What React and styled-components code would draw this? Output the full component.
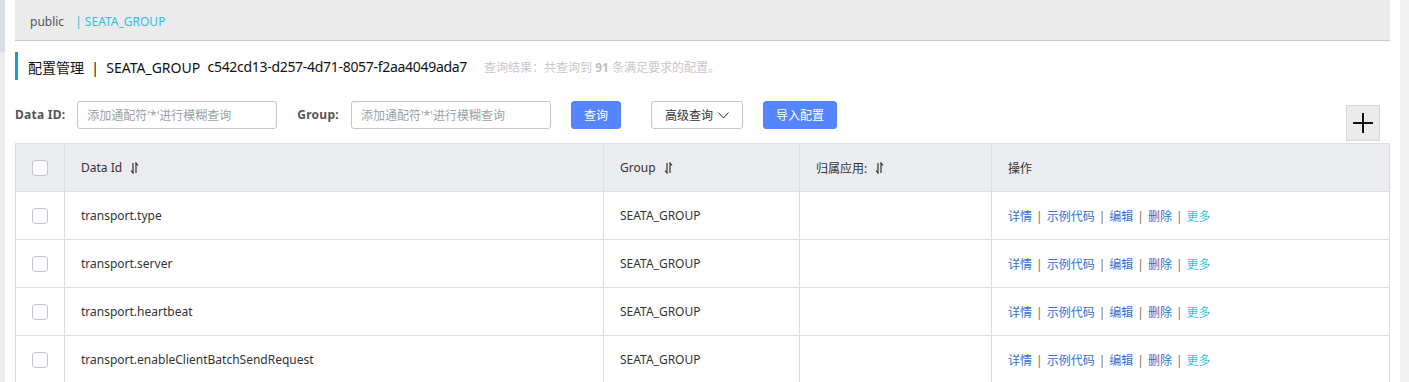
import React from "react";
import styled, { createGlobalStyle } from "styled-components";

const Global = createGlobalStyle`
  html, body { margin: 0; padding: 0; background: #fff; }
  body {
    font-family: "Noto Sans", "Noto Sans CJK SC", sans-serif;
    color: #333;
    overflow: hidden;
  }
  * { box-sizing: border-box; }
`;

const Page = styled.div`
  display: flex;
  width: 1409px;
  height: 382px;
  overflow: hidden;
`;

const Rail = styled.div`
  width: 5px;
  flex: none;
  background: linear-gradient(#dadee5 0, #dadee5 52px, #eaecf0 52px);
`;

const Scrollbar = styled.div`
  width: 9px;
  flex: none;
  background: #f1f1f1;
`;

const Main = styled.div`
  flex: 1;
  min-width: 0;
  padding: 0 10px;
  display: flex;
  flex-direction: column;
`;

const NsBar = styled.div`
  flex: none;
  height: 41px;
  background: #ebebeb;
  border-bottom: 1px solid #c9c9c9;
  display: flex;
  align-items: center;
  padding: 3px 0 0 15px;
  font-size: 12px;
`;

const NsItem = styled.span`
  color: ${(p) => (p.$active ? "#2fc0dc" : "#555")};
  margin-right: ${(p) => (p.$active ? "0" : "11px")};
`;

const TitleRow = styled.div`
  flex: none;
  margin-top: 11px;
  height: 28px;
  border-left: 3px solid #1a9bd1;
  padding: 1px 0 0 10px;
  display: flex;
  align-items: center;
  font-size: 14px;
  color: #111;
  white-space: pre;
`;

const Uuid = styled.span`
  letter-spacing: -0.3px;
`;

const Hint = styled.span`
  margin-left: 17px;
  font-size: 12px;
  color: #c8c8c8;
  & b { font-weight: bold; color: #bdbdbd; }
`;

const SearchRow = styled.div`
  flex: none;
  margin-top: 21px;
  height: 40px;
  display: flex;
  align-items: flex-start;
`;

const Label = styled.label`
  height: 28px;
  line-height: 28px;
  font-size: 12px;
  font-weight: bold;
  letter-spacing: 0.25px;
  color: #555;
  margin-right: 12px;
  margin-left: ${(p) => p.$ml || 0}px;
`;

const Input = styled.input`
  width: 200px;
  height: 28px;
  border: 1px solid #c4c6cf;
  border-radius: 3px;
  padding: 0 9px;
  font-size: 12px;
  font-family: inherit;
  outline: none;
  &::placeholder { color: #a0a0a0; }
`;

const Btn = styled.button`
  height: 28px;
  margin-left: ${(p) => p.$ml}px;
  padding: 0 ${(p) => p.$px || 12}px;
  border-radius: 3px;
  font-size: 12px;
  font-family: inherit;
  display: inline-flex;
  align-items: center;
  gap: 5px;
  cursor: pointer;
  border: 1px solid ${(p) => (p.$primary ? "#5584ff" : "#c4c6cf")};
  background: ${(p) => (p.$primary ? "#5584ff" : "#fff")};
  color: ${(p) => (p.$primary ? "#fff" : "#333")};
`;

const PlusBtn = styled.button`
  margin-left: auto;
  margin-right: 10px;
  margin-top: 4px;
  width: 34px;
  height: 36px;
  background: #ebebeb;
  border: 1px solid #d8d8d8;
  padding: 0;
  display: flex;
  align-items: center;
  justify-content: center;
`;

const Table = styled.div`
  flex: none;
  margin-top: 2px;
  border: 1px solid #dcdee3;
  border-bottom: none;
`;

const Row = styled.div`
  display: grid;
  grid-template-columns: 49px 539px 196px 192px 1fr;
  height: 48px;
  border-bottom: 1px solid #dcdee3;
  background: ${(p) => (p.$head ? "#ebecf0" : "#fff")};
`;

const Cell = styled.div`
  display: flex;
  align-items: center;
  padding-left: 16px;
  font-size: 12px;
  color: #333;
  border-right: ${(p) => (p.$last ? "none" : "1px solid #dcdee3")};
  white-space: nowrap;
  gap: 8px;
`;

const Check = styled.span`
  width: 16px;
  height: 16px;
  border: 1px solid #c4c6cf;
  border-radius: 3px;
  background: #fff;
  display: inline-block;
`;

const Link = styled.a`
  color: ${(p) => (p.$more ? "#37c5df" : "#2f6fd6")};
  text-decoration: none;
`;

const Sep = styled.span`
  color: #8a6a50;
  margin: 0 4px;
`;

const SortIcon = () => (
  <svg width="9" height="12" viewBox="0 0 9 12" fill="none" stroke="#333" strokeWidth="1.2">
    <path d="M3 1 V11 L1 8.5" />
    <path d="M6 11 V1 L8 3.5" />
  </svg>
);

const Chevron = () => (
  <svg width="11" height="7" viewBox="0 0 11 7" fill="none" stroke="#333" strokeWidth="1">
    <path d="M0.5 0.5 L5.5 6 L10.5 0.5" />
  </svg>
);

const Plus = () => (
  <svg width="22" height="22" viewBox="0 0 22 22" stroke="#111" strokeWidth="2">
    <path d="M1 11 H21" />
    <path d="M11 1 V21" />
  </svg>
);

const rows = [
  "transport.type",
  "transport.server",
  "transport.heartbeat",
  "transport.enableClientBatchSendRequest",
];

export default function App() {
  return (
    <>
      <Global />
      <Page>
        <Rail />
        <Main>
          <NsBar>
            <NsItem>public</NsItem>
            <NsItem $active>| SEATA_GROUP</NsItem>
          </NsBar>
          <TitleRow>
            <span>{"配置管理  |  SEATA_GROUP  "}</span>
            <Uuid>c542cd13-d257-4d71-8057-f2aa4049ada7</Uuid>
            <Hint>
              查询结果：共查询到 <b>91</b> 条满足要求的配置。
            </Hint>
          </TitleRow>
          <SearchRow>
            <Label>Data ID:</Label>
            <Input placeholder="添加通配符'*'进行模糊查询" />
            <Label $ml={20}>Group:</Label>
            <Input placeholder="添加通配符'*'进行模糊查询" />
            <Btn $primary $ml={20}>查询</Btn>
            <Btn $ml={30} $px={13}>
              高级查询 <Chevron />
            </Btn>
            <Btn $primary $ml={20}>导入配置</Btn>
            <PlusBtn>
              <Plus />
            </PlusBtn>
          </SearchRow>
          <Table>
            <Row $head>
              <Cell><Check /></Cell>
              <Cell>Data Id <SortIcon /></Cell>
              <Cell>Group <SortIcon /></Cell>
              <Cell>归属应用: <SortIcon /></Cell>
              <Cell $last>操作</Cell>
            </Row>
            {rows.map((r) => (
              <Row key={r}>
                <Cell><Check /></Cell>
                <Cell>{r}</Cell>
                <Cell>SEATA_GROUP</Cell>
                <Cell></Cell>
                <Cell $last>
                  <span>
                    <Link>详情</Link>
                    <Sep>|</Sep>
                    <Link>示例代码</Link>
                    <Sep>|</Sep>
                    <Link>编辑</Link>
                    <Sep>|</Sep>
                    <Link>删除</Link>
                    <Sep>|</Sep>
                    <Link $more>更多</Link>
                  </span>
                </Cell>
              </Row>
            ))}
          </Table>
        </Main>
        <Scrollbar />
      </Page>
    </>
  );
}
